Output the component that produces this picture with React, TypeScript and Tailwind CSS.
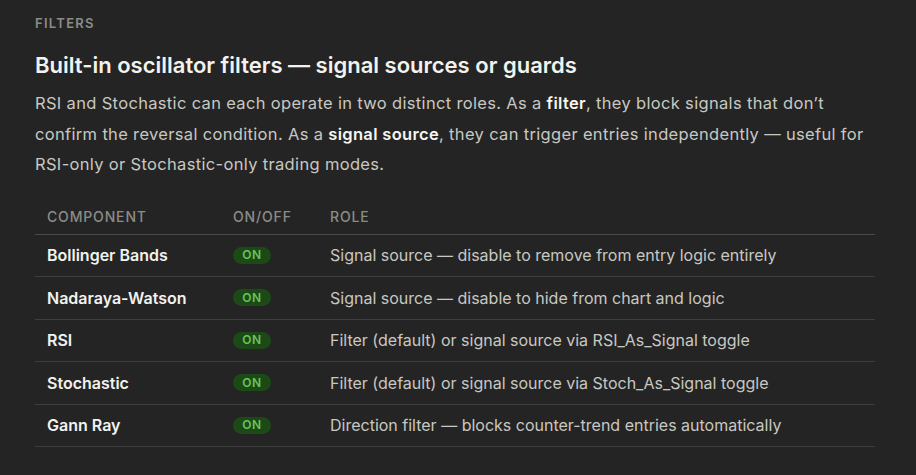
import React from "react";

const rows = [
  ["Bollinger Bands", "Signal source — disable to remove from entry logic entirely"],
  ["Nadaraya-Watson", "Signal source — disable to hide from chart and logic"],
  ["RSI", "Filter (default) or signal source via RSI_As_Signal toggle"],
  ["Stochastic", "Filter (default) or signal source via Stoch_As_Signal toggle"],
  ["Gann Ray", "Direction filter — blocks counter-trend entries automatically"],
];

export default function App() {
  return (
    <div
      className="min-h-[475px] w-full bg-[#242424] px-[35px] pt-[15px]"
      style={{ fontFamily: "Inter, 'Liberation Sans', sans-serif" }}
    >
      <div className="text-[13px] font-semibold uppercase leading-[16px] tracking-[0.1em] text-[#8c8c87]">
        Filters
      </div>
      <h2 className="mt-[20px] text-[22px] font-semibold leading-[28px] text-[#f2f2ee]">
        Built-in oscillator filters — signal sources or guards
      </h2>
      <p className="mt-[9px] max-w-[838px] text-[16.5px] leading-[30.5px] text-[#c8c8c2] tracking-[0.02em]">
        RSI and Stochastic can each operate in two distinct roles. As a{" "}
        <b className="font-semibold text-[#f5f5f2]">filter</b>, they block signals that don’t confirm the reversal condition. As a{" "}
        <b className="font-semibold text-[#f5f5f2]">signal source</b>, they can trigger entries independently — useful for RSI-only or Stochastic-only trading modes.
      </p>
      <table className="mt-[26px] w-[840px] border-collapse text-left">
        <thead>
          <tr className="border-b border-[#4a4a48]">
            <th className="w-[198px] pb-[7px] pl-[12px] text-[14px] font-medium uppercase tracking-[0.06em] text-[#8c8c87]">
              Component
            </th>
            <th className="w-[97px] pb-[7px] text-[14px] font-medium uppercase tracking-[0.06em] text-[#8c8c87]">
              On/Off
            </th>
            <th className="pb-[7px] text-[14px] font-medium uppercase tracking-[0.06em] text-[#8c8c87]">
              Role
            </th>
          </tr>
        </thead>
        <tbody>
          {rows.map(([name, role]) => (
            <tr key={name} className="h-[42.5px] border-b border-[#3e3e3c]">
              <td className="pl-[12px] text-[16px] font-semibold text-[#f2f2ee]">{name}</td>
              <td className="align-middle">
                <div className="flex h-[17px] w-[38px] items-center justify-center rounded-full bg-[#1c4a17] text-[12px] font-semibold tracking-[0.05em] text-[#6ac25a]">
                  ON
                </div>
              </td>
              <td className="text-[16px] text-[#c8c8c2]">{role}</td>
            </tr>
          ))}
        </tbody>
      </table>
    </div>
  );
}
